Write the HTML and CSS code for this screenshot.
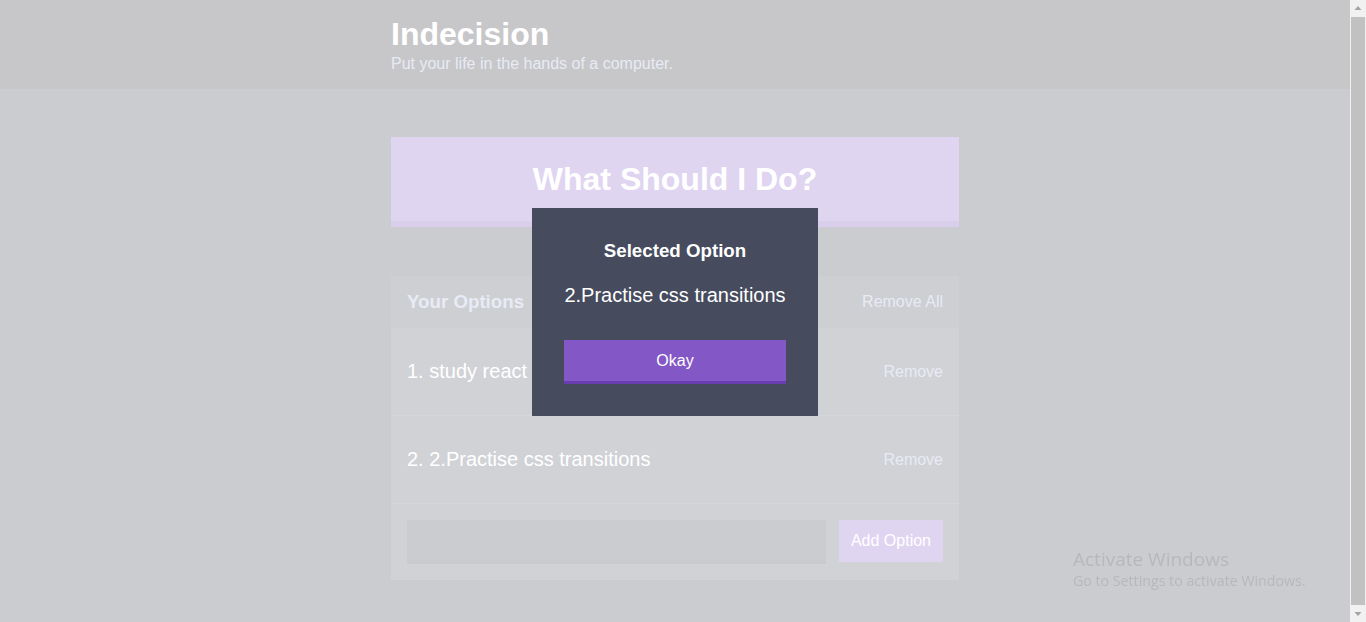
FILE: index.html
```html
<!DOCTYPE html>
<html lang="en">
<head>
<meta charset="utf-8">
<title>Indecision</title>
<link rel="stylesheet" href="styles.css">
</head>
<body>
<div class="page">
  <header class="header">
    <div class="container">
      <h1 class="header__title">Indecision</h1>
      <h2 class="header__subtitle">Put your life in the hands of a computer.</h2>
    </div>
  </header>
  <div class="container">
    <button class="big-button">What Should I Do?</button>
    <div class="widget">
      <div class="widget-header">
        <h3 class="widget-header__title">Your Options</h3>
        <button class="button--link">Remove All</button>
      </div>
      <div class="option">
        <p class="option__text">1. study react</p>
        <button class="button--link">Remove</button>
      </div>
      <div class="option">
        <p class="option__text">2. 2.Practise css transitions</p>
        <button class="button--link">Remove</button>
      </div>
      <form class="add-option">
        <input class="add-option__input" type="text" name="option">
        <button class="button button--add" type="button">Add Option</button>
      </form>
    </div>
  </div>
</div>

<div class="overlay">
  <div class="modal">
    <h3 class="modal__title">Selected Option</h3>
    <p class="modal__body">2.Practise css transitions</p>
    <button class="button button--block">Okay</button>
  </div>
</div>

<div class="watermark">
  <div class="watermark__title">Activate Windows</div>
  <div class="watermark__text">Go to Settings to activate Windows.</div>
</div>

<div class="scrollbar">
  <div class="scrollbar__arrow">
    <svg width="16" height="17" viewBox="0 0 16 17"><polygon points="4.5,10 8,6 11.5,10" fill="#a3a3a3"/></svg>
  </div>
  <div class="scrollbar__thumb"></div>
  <div class="scrollbar__arrow">
    <svg width="16" height="17" viewBox="0 0 16 17"><polygon points="4.5,7 11.5,7 8,11" fill="#a3a3a3"/></svg>
  </div>
</div>
</body>
</html>
```

FILE: styles.css
```css
html, body {
  margin: 0;
  height: 100%;
  overflow: hidden;
}

body {
  background: #333745;
  font-family: "Liberation Sans", Arial, Helvetica, sans-serif;
  color: #ffffff;
}

.page {
  margin-right: 16px;
}

.container {
  max-width: 600px;
  margin: 0 auto;
  padding: 0 16px;
  box-sizing: border-box;
}

/* Header */
.header {
  background: #20222b;
  padding: 16px 0 14px;
  margin-bottom: 48px;
}

.header__title {
  margin: 0;
  font-size: 32px;
  line-height: 36px;
  font-weight: bold;
  color: #ffffff;
}

.header__subtitle {
  margin: 0;
  font-size: 16px;
  line-height: 23px;
  font-weight: normal;
  color: #a5afd7;
}

/* Big button */
.big-button {
  display: block;
  width: 100%;
  background: #8357c5;
  border: none;
  border-bottom: 6px solid #6a3caf;
  color: #ffffff;
  font-family: inherit;
  font-weight: bold;
  font-size: 32px;
  line-height: 36px;
  padding: 24px;
  margin: 0 0 49px;
}

/* Widget */
.widget {
  background: #464b5e;
  margin-bottom: 48px;
}

.widget-header {
  background: #3c4251;
  display: flex;
  justify-content: space-between;
  align-items: center;
  height: 52px;
  padding: 0 16px;
}

.widget-header__title {
  margin: 0;
  font-size: 18.72px;
  font-weight: bold;
  color: #a5afd7;
}

.button--link {
  background: none;
  border: none;
  padding: 0;
  color: #a5afd7;
  font-family: inherit;
  font-size: 16px;
  line-height: 18px;
}

.option {
  display: flex;
  justify-content: space-between;
  align-items: center;
  padding: 32px 16px;
  border-bottom: 1px solid #5b6179;
}

.option__text {
  margin: 0;
  color: #ffffff;
  font-size: 20px;
  line-height: 23px;
}

.add-option {
  display: flex;
  align-items: flex-start;
  padding: 16px;
}

.add-option__input {
  flex: 1;
  height: 44px;
  box-sizing: border-box;
  background: #333745;
  border: none;
  border-bottom: 3px solid #2b2e3a;
  margin: 0 13px 0 0;
  padding: 12px;
  color: #a5afd7;
  font-family: inherit;
  font-size: 16px;
  outline: none;
}

.button {
  background: #8357c5;
  border: none;
  border-bottom: 3px solid #6a3caf;
  color: #ffffff;
  font-family: inherit;
  font-size: 16px;
  line-height: 17px;
  padding: 11px 12px 11px;
}

.button--add {
  border-bottom: none;
  padding: 12px 12px 13px;
}

.button--block {
  display: block;
  width: 100%;
  padding: 12px;
}

/* Modal */
.overlay {
  position: fixed;
  top: 0;
  left: 0;
  right: 16px;
  bottom: 0;
  background: rgba(255, 255, 255, 0.75);
  display: flex;
  align-items: center;
  justify-content: center;
  padding-top: 2px;
  box-sizing: border-box;
}

.modal {
  background: #464b5e;
  color: #ffffff;
  padding: 32px;
  text-align: center;
  max-width: 300px;
}

.modal__title {
  margin: 0 0 22px;
  font-size: 18.72px;
  font-weight: bold;
}

.modal__body {
  margin: 0 0 33px;
  font-size: 20px;
  line-height: 23px;
}

/* Windows watermark */
.watermark {
  position: fixed;
  left: 1073px;
  top: 546px;
  font-family: "Open Sans", "Noto Sans", sans-serif;
  color: #b7b8bc;
}

.watermark__title {
  font-size: 19px;
  line-height: 26px;
}

.watermark__text {
  font-size: 14.2px;
  line-height: 18px;
}

/* Scrollbar */
.scrollbar {
  position: fixed;
  top: 0;
  right: 0;
  width: 16px;
  height: 100%;
  background: #f1f1f1;
  display: flex;
  flex-direction: column;
}

.scrollbar__arrow {
  height: 17px;
  flex: none;
}

.scrollbar__arrow svg {
  display: block;
}

.scrollbar__thumb {
  flex: 1;
  margin: 0 1px;
  background: #c1c1c1;
}
```
